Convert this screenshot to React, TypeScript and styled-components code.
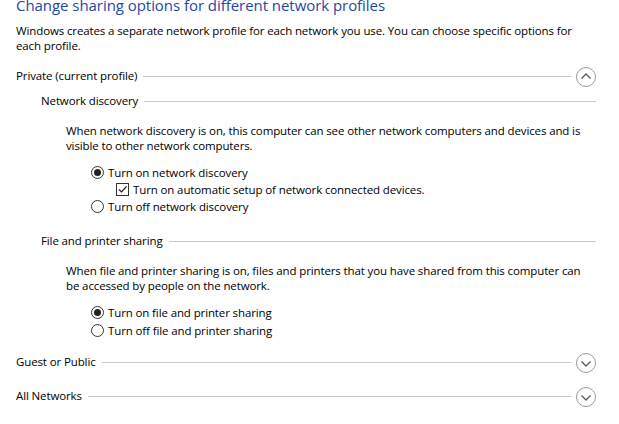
import styled, { createGlobalStyle } from 'styled-components';

const GlobalStyle = createGlobalStyle`
  html, body {
    margin: 0;
    background: #fff;
  }
  body {
    font-family: "Open Sans", "Noto Sans", sans-serif;
    font-size: 11.5px;
    letter-spacing: -0.12px;
    color: #000;
  }
`;

function Chevron({ up }: { up?: boolean }) {
  return (
    <ExpandButton>
      <svg width="20" height="20" viewBox="0 0 20 20">
        <circle cx="10" cy="10" r="9.5" fill="none" stroke="#9a9a9a" strokeWidth="1" />
        {up ? (
          <path d="M5.5 11.5 L10 7 L14.5 11.5" fill="none" stroke="#5a5a5a" strokeWidth="1.3" />
        ) : (
          <path d="M5.5 8.5 L10 13 L14.5 8.5" fill="none" stroke="#5a5a5a" strokeWidth="1.3" />
        )}
      </svg>
    </ExpandButton>
  );
}

function Radio({ checked, children }: { checked?: boolean; children: React.ReactNode }) {
  return (
    <OptionRow $indent={75}>
      <RadioDot $checked={checked} />
      <span>{children}</span>
    </OptionRow>
  );
}

function Check({ children }: { children: React.ReactNode }) {
  return (
    <OptionRow $indent={100}>
      <CheckBox>
        <svg width="11" height="11" viewBox="0 0 11 11">
          <path d="M2 5.5 L4.5 8 L9.5 2.5" fill="none" stroke="#222" strokeWidth="1.2" />
        </svg>
      </CheckBox>
      <span>{children}</span>
    </OptionRow>
  );
}

export default function App() {
  return (
    <>
      <GlobalStyle />
      <Page>
        <Title>Change sharing options for different network profiles</Title>
        <Intro>
          Windows creates a separate network profile for each network you use. You can choose specific options for
          <br />
          each profile.
        </Intro>

        <ProfileHeader>
          <span>Private (current profile)</span>
          <Rule />
          <Chevron up />
        </ProfileHeader>

        <GroupHeader>
          <span>Network discovery</span>
          <Rule />
        </GroupHeader>
        <Para>
          When network discovery is on, this computer can see other network computers and devices and is
          <br />
          visible to other network computers.
        </Para>
        <Options>
          <Radio checked>Turn on network discovery</Radio>
          <Check>Turn on automatic setup of network connected devices.</Check>
          <Radio>Turn off network discovery</Radio>
        </Options>

        <GroupHeader $gap={17}>
          <span>File and printer sharing</span>
          <Rule />
        </GroupHeader>
        <Para>
          When file and printer sharing is on, files and printers that you have shared from this computer can
          <br />
          be accessed by people on the network.
        </Para>
        <Options $gap={2}>
          <Radio checked>Turn on file and printer sharing</Radio>
          <Radio>Turn off file and printer sharing</Radio>
        </Options>

        <ProfileHeader $gap={13}>
          <span>Guest or Public</span>
          <Rule />
          <Chevron />
        </ProfileHeader>
        <ProfileHeader $gap={14}>
          <span>All Networks</span>
          <Rule />
          <Chevron />
        </ProfileHeader>
      </Page>
    </>
  );
}

const Page = styled.div`
  padding: 0 23px 16px 16px;
  display: flex;
  flex-direction: column;
`;

const Title = styled.h1`
  margin: -5px 0 0;
  font-size: 15px;
  letter-spacing: -0.05px;
  line-height: 21px;
  font-weight: normal;
  color: #1f48a6;
  white-space: nowrap;
`;

const Intro = styled.p`
  margin: 7px 0 0;
  line-height: 15px;
  white-space: nowrap;
`;

const ProfileHeader = styled.div<{ $gap?: number }>`
  display: flex;
  align-items: center;
  margin-top: ${(p) => p.$gap ?? 12}px;
  height: 20px;
  white-space: nowrap;
`;

const GroupHeader = styled.div<{ $gap?: number }>`
  display: flex;
  align-items: center;
  margin: ${(p) => p.$gap ?? 6}px 0 0 25px;
  height: 18px;
  white-space: nowrap;
`;

const Rule = styled.div`
  flex: 1;
  height: 0;
  border-top: 1px solid #c8c8c8;
  margin: 3px 0 0 6px;
`;

const ExpandButton = styled.div`
  width: 20px;
  height: 20px;
  margin: 4px 0 0 5px;
  display: flex;
`;

const Para = styled.p`
  margin: 14px 0 0 50px;
  line-height: 15px;
  white-space: nowrap;
`;

const Options = styled.div<{ $gap?: number }>`
  margin-top: 11px;
  display: flex;
  flex-direction: column;
  gap: ${(p) => p.$gap ?? 1}px;
`;

const OptionRow = styled.div<{ $indent: number }>`
  display: flex;
  align-items: center;
  gap: 4px;
  padding-left: ${(p) => p.$indent}px;
  height: 16px;
  white-space: nowrap;
`;

const RadioDot = styled.span<{ $checked?: boolean }>`
  width: 11px;
  height: 11px;
  border: 1px solid #333;
  border-radius: 50%;
  display: flex;
  align-items: center;
  justify-content: center;

  &::after {
    content: '';
    width: 7px;
    height: 7px;
    border-radius: 50%;
    background: #222;
    display: ${(p) => (p.$checked ? 'block' : 'none')};
  }
`;

const CheckBox = styled.span`
  width: 11px;
  height: 11px;
  border: 1px solid #333;
  display: flex;
  align-items: center;
  justify-content: center;
`;
